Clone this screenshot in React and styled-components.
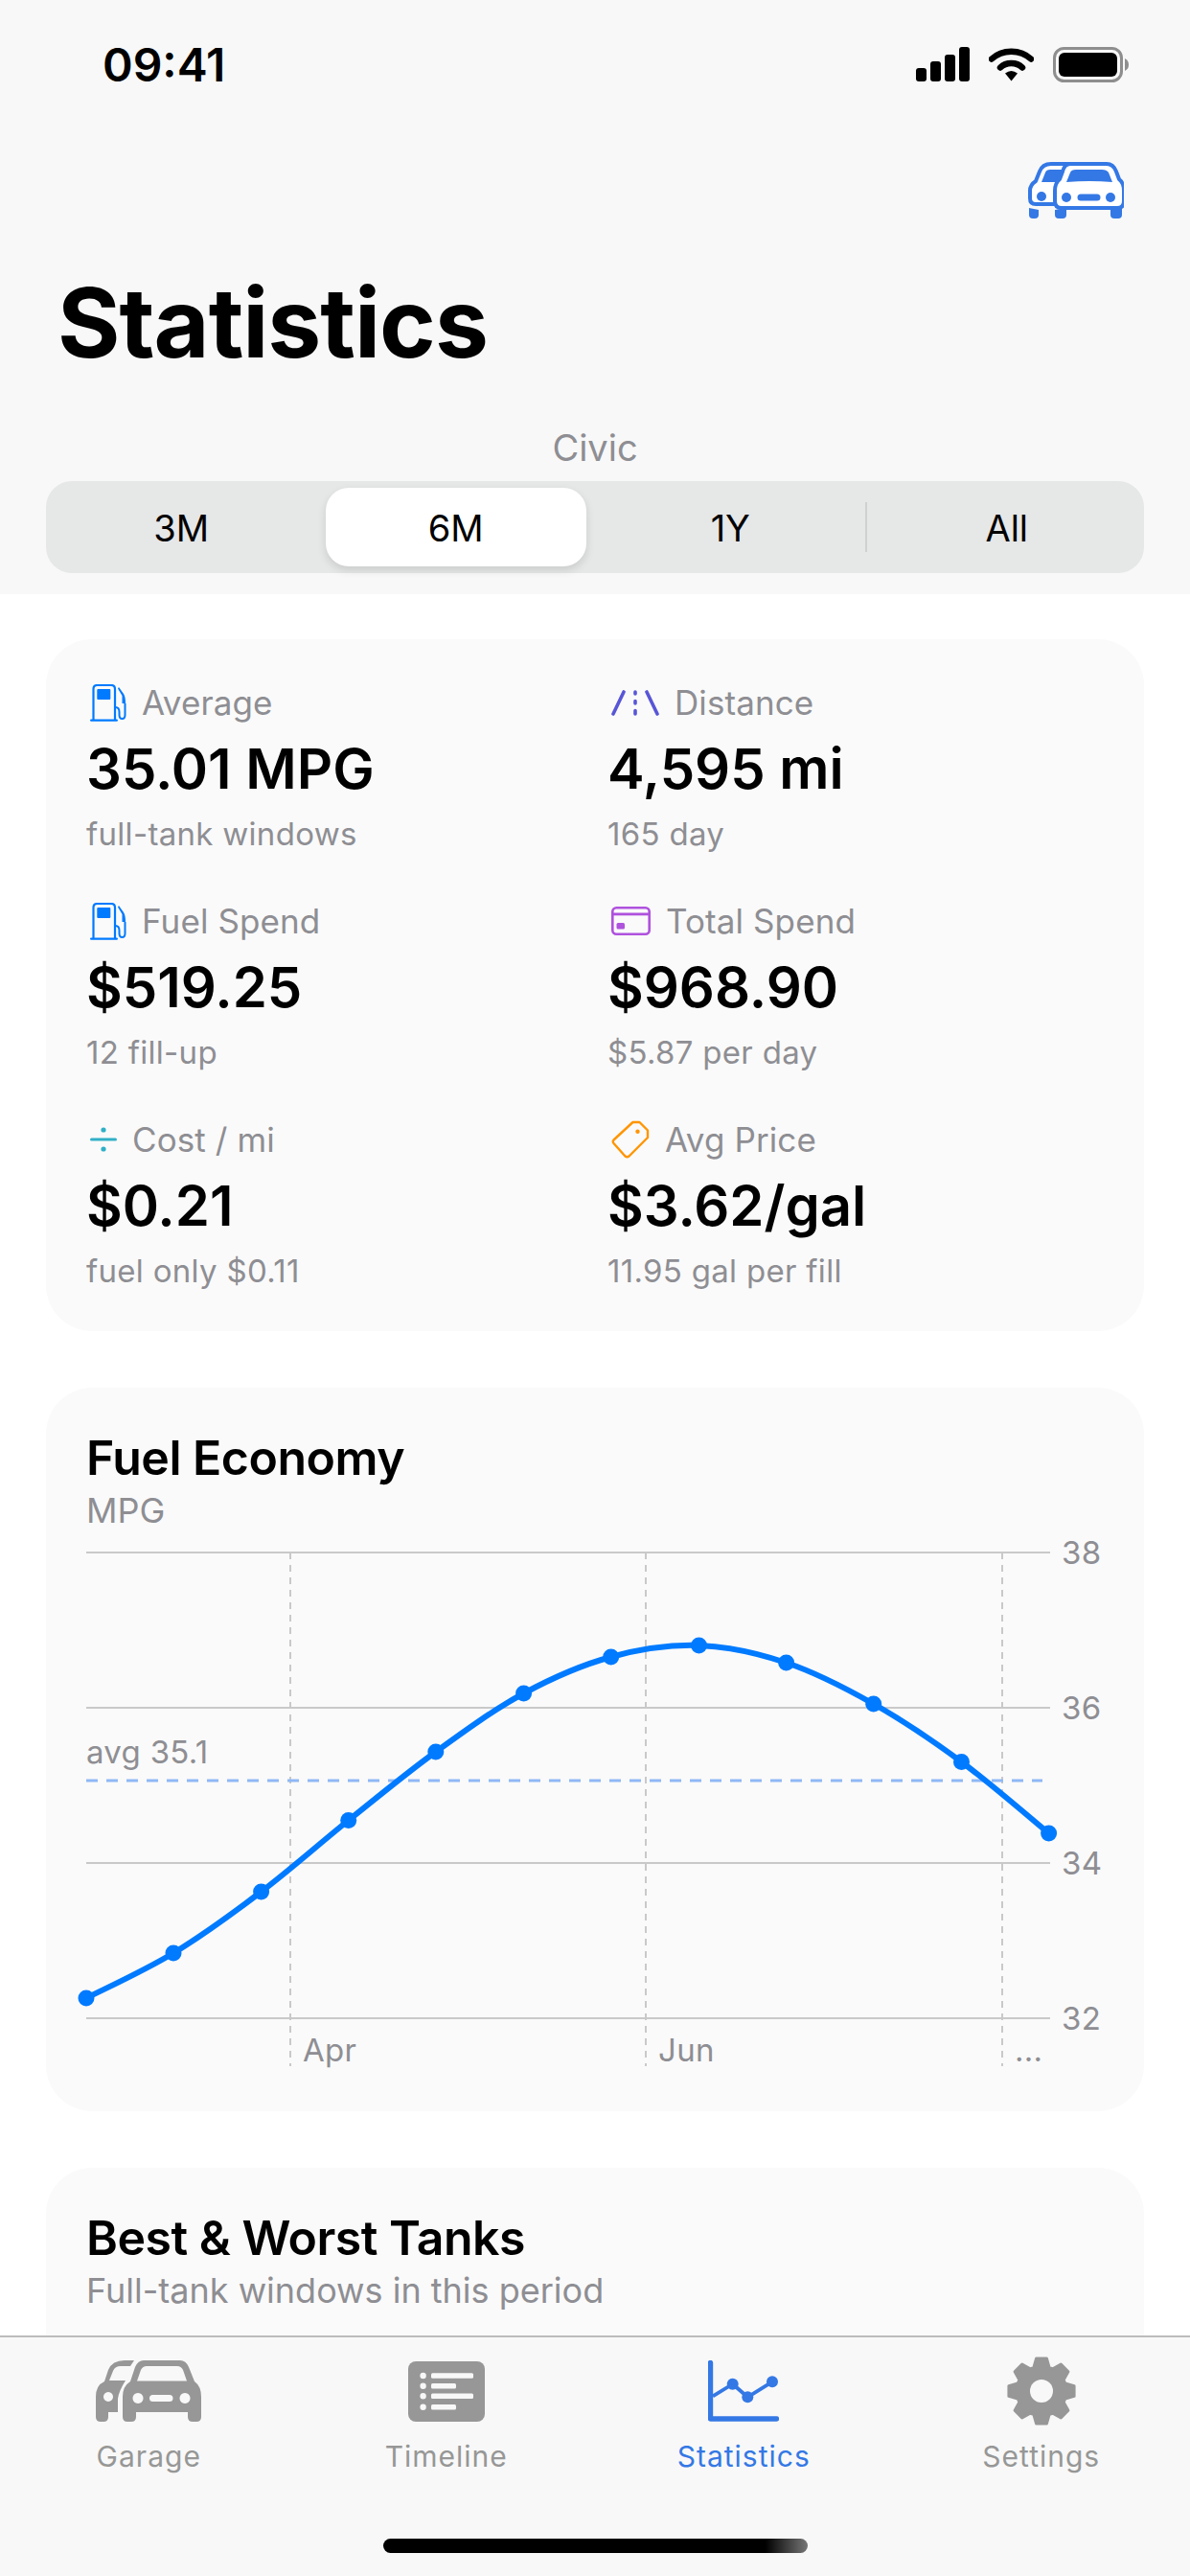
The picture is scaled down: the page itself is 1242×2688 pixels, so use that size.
import React from "react";
import styled, { createGlobalStyle } from "styled-components";

const GlobalStyle = createGlobalStyle`
  html, body { margin: 0; padding: 0; background: #fff; }
  body { font-family: Inter, "Liberation Sans", sans-serif; }
  * { box-sizing: border-box; }
`;

const GREY = "#8e8e93";
const BLUE = "#3478e5";
const TAB_GREY = "#969796";
const BAR_BG = "#f8f8f8";

const Page = styled.div`
  width: 1242px;
  height: 2688px;
  display: flex;
  flex-direction: column;
  overflow: hidden;
  background: #fff;
`;

const Header = styled.header`
  height: 620px;
  flex: none;
  background: ${BAR_BG};
`;

const StatusBar = styled.div`
  height: 134px;
  display: flex;
  align-items: center;
  justify-content: space-between;
  padding: 0 64px 0 107px;
`;

const Clock = styled.span`
  font-size: 48px;
  font-weight: 600;
  color: #000;
  letter-spacing: 0;
`;

const StatusIcons = styled.div`
  display: flex;
  align-items: center;
  gap: 20px;
`;

const TopAction = styled.div`
  margin-top: 35px;
  height: 59px;
  padding-right: 69px;
  display: flex;
  justify-content: flex-end;
`;

const Title = styled.h1`
  margin: 49px 0 0 60px;
  font-size: 100px;
  line-height: 120px;
  font-weight: 700;
  color: #000;
  letter-spacing: -1px;
`;

const VehicleName = styled.div`
  margin-top: 47px;
  font-size: 38px;
  line-height: 46px;
  text-align: center;
  color: ${GREY};
`;

const Segments = styled.div`
  margin: 12px 48px 0;
  height: 96px;
  border-radius: 27px;
  background: #e6e7e7;
  display: grid;
  grid-template-columns: repeat(4, 1fr);
`;

const Segment = styled.div`
  position: relative;
  display: flex;
  align-items: center;
  justify-content: center;
  padding-top: 2px;
  padding-right: ${({ $last }) => ($last ? "0" : "4px")};
  font-size: 38px;
  font-weight: 400;
  color: #000;
  ${({ $active }) =>
    $active &&
    `
    margin: 7px 9px 7px 5px;
    padding-right: 0;
    background: #fff;
    border-radius: 24px;
    box-shadow: 0 4px 10px rgba(0, 0, 0, 0.12);
  `}
  ${({ $divider }) =>
    $divider &&
    `
    &::after {
      content: "";
      position: absolute;
      right: 3px;
      top: 22px;
      bottom: 22px;
      width: 2px;
      background: #cfd0d0;
    }
  `}
`;

const Content = styled.main`
  flex: 1;
  min-height: 0;
  overflow: hidden;
  padding: 47px 48px 0;
  display: flex;
  flex-direction: column;
  gap: 59px;
`;

const Card = styled.section`
  flex: none;
  background: #fafafa;
  border-radius: 48px;
`;

const StatGrid = styled.div`
  display: grid;
  grid-template-columns: 544px 1fr;
  row-gap: 47px;
  padding: 43px 42px 42px;
`;

const Stat = styled.div`
  display: flex;
  flex-direction: column;
`;

const StatLabel = styled.div`
  height: 46px;
  display: flex;
  align-items: center;
  gap: 16px;
  padding-left: 4px;
  font-size: 35px;
  color: ${GREY};
  letter-spacing: 0.1px;
`;

const StatValue = styled.div`
  margin-top: 11px;
  font-size: 58px;
  line-height: 70px;
  font-weight: 600;
  color: #000;
`;

const StatNote = styled.div`
  margin-top: 12px;
  font-size: 33px;
  line-height: 42px;
  color: ${GREY};
  letter-spacing: 0.3px;
`;

const CardHead = styled.div`
  padding: 43px 42px 0;
`;

const CardTitle = styled.h2`
  margin: 0;
  font-size: 50px;
  line-height: 60px;
  font-weight: 600;
  color: #000;
  letter-spacing: -0.5px;
`;

const CardSub = styled.div`
  margin-top: 3px;
  font-size: 36px;
  line-height: 44px;
  color: ${GREY};
`;

const TanksBody = styled.div`
  height: 400px;
`;

const Chart = styled.svg`
  display: block;
  margin-bottom: 43px;
  text {
    font-family: Inter, "Liberation Sans", sans-serif;
    font-size: 33px;
    letter-spacing: 0.3px;
    fill: ${GREY};
  }
`;

const TabBar = styled.nav`
  flex: none;
  height: 251px;
  background: ${BAR_BG};
  border-top: 2px solid #bcbcbc;
  padding-top: 20px;
  display: flex;
  flex-direction: column;
`;

const Tabs = styled.div`
  display: grid;
  grid-template-columns: repeat(4, 1fr);
`;

const Tab = styled.div`
  display: flex;
  flex-direction: column;
  align-items: center;
  color: ${({ $active }) => ($active ? BLUE : TAB_GREY)};
`;

const TabIcon = styled.div`
  height: 72px;
  display: flex;
  align-items: center;
  justify-content: center;
`;

const TabLabel = styled.span`
  margin-top: 13px;
  font-size: 30px;
  line-height: 38px;
  font-weight: 400;
  letter-spacing: 1px;
`;

const HomeIndicator = styled.div`
  width: 443px;
  height: 15px;
  margin: auto auto 24px;
  border-radius: 8px;
  background: linear-gradient(90deg, #000 0%, #000 90%, #777 100%);
`;

function SignalIcon() {
  return (
    <svg width="56" height="36" viewBox="0 0 56 36">
      <rect x="0" y="22" width="11" height="14" rx="3" fill="#000" />
      <rect x="15" y="15" width="11" height="21" rx="3" fill="#000" />
      <rect x="30" y="8" width="11" height="28" rx="3" fill="#000" />
      <rect x="45" y="0" width="11" height="36" rx="3" fill="#000" />
    </svg>
  );
}

function WifiIcon() {
  return (
    <svg width="47" height="36" viewBox="0 0 47 36">
      <path d="M3 12.5 C14 2 33 2 44 12.5" fill="none" stroke="#000" strokeWidth="6.5" strokeLinecap="round" />
      <path d="M12 21.5 C18 15.5 29 15.5 35 21.5" fill="none" stroke="#000" strokeWidth="6.5" strokeLinecap="round" />
      <path d="M17 27.5 Q23.5 22.5 30 27.5 L23.5 35.5 Z" fill="#000" />
    </svg>
  );
}

function BatteryIcon() {
  return (
    <svg width="79" height="37" viewBox="0 0 79 37">
      <rect x="1.5" y="1.5" width="70" height="34" rx="10" fill="none" stroke="#8e8e8e" strokeWidth="3" />
      <rect x="6" y="6" width="61" height="25" rx="6" fill="#000" />
      <path d="M75 12 Q79 14 79 18.5 Q79 23 75 25 Z" fill="#8e8e8e" />
    </svg>
  );
}

function GarageOutlineIcon() {
  return (
    <svg width="100" height="59" viewBox="0 0 100 59">
      <path d="M11 50 V55 Q11 59 7 59 H5 Q1 59 1 55 V48 Z" fill={BLUE} />
      <path
        d="M30 2 H70 L80 30 V46 H30 V44 H8 Q2 44 2 38 V30 Q2 24 8 20 L12 10 Q15 2 24 2 Z"
        fill="#fff"
        stroke={BLUE}
        strokeWidth="4"
        strokeLinejoin="round"
      />
      <path d="M14 21 L18 11 Q19 8 23 8 H45 L36 21 Z" fill={BLUE} />
      <circle cx="14" cy="36" r="5" fill={BLUE} />
      <path d="M28 50 V55 Q28 59 32 59 H36 Q40 59 40 55 V48 Z" fill={BLUE} />
      <path d="M86 50 V55 Q86 59 90 59 H94 Q98 59 98 55 V48 Z" fill={BLUE} />
      <path
        d="M44 2 H82 Q89 2 92 10 L95 18 Q100 22 100 30 V41 Q100 48 93 48 H35 Q28 48 28 41 V30 Q28 22 33 18 L36 10 Q38 2 44 2 Z"
        fill="#fff"
        stroke={BLUE}
        strokeWidth="4"
        strokeLinejoin="round"
      />
      <path d="M40 21 L44 11 Q45 8 50 8 H77 Q82 8 84 11 L88 21 Q64 19 40 21 Z" fill={BLUE} />
      <circle cx="40" cy="37" r="5" fill={BLUE} />
      <circle cx="86" cy="37" r="5" fill={BLUE} />
      <rect x="51.5" y="33.5" width="24" height="7" rx="3.5" fill={BLUE} />
    </svg>
  );
}

function GarageFilledIcon() {
  return (
    <svg width="110" height="64" viewBox="0 0 110 64">
      <path
        fill={TAB_GREY}
        fillRule="evenodd"
        d="M40 0 H30 Q17 0 13 10 L9 22 Q0 26 0 38 V59 Q0 64 5 64 H8 Q13 64 13 59 V54 H23 V40 Q24 32 31 21 H14 L18 11 Q20 6 26 6 H36 Z M13 33 A5 5 0 1 1 12.99 33 Z"
      />
      <path
        fill={TAB_GREY}
        fillRule="evenodd"
        d="M50 0 H88 Q94 0 97 7 L103 22 Q110 27 110 38 V59 Q110 64 105 64 H101 Q96 64 96 59 V54 H42 V59 Q42 64 37 64 H33 Q28 64 28 59 V38 Q28 27 36 22 L41 7 Q44 0 50 0 Z M43 21.5 H95 L91 10 Q89 6 85 6 H53 Q49 6 47 10 Z M44 34 A5.5 5.5 0 1 0 44.01 34 Z M93 34 A5.5 5.5 0 1 0 93.01 34 Z M59.5 36 H77 A3.5 3.5 0 0 1 77 43 H59.5 A3.5 3.5 0 0 1 59.5 36 Z"
      />
    </svg>
  );
}

function TimelineIcon() {
  const rows = [
    [15, 68],
    [25.7, 50],
    [36.3, 68],
    [47.7, 50],
  ];
  return (
    <svg width="80" height="63" viewBox="0 0 80 63">
      <rect width="80" height="63" rx="8" fill={TAB_GREY} />
      {rows.map(([y, end]) => (
        <g key={y} fill={BAR_BG}>
          <circle cx="15.6" cy={y} r="3.2" />
          <rect x="24" y={y - 2.8} width={end - 24} height="5.6" rx="1.5" />
        </g>
      ))}
    </svg>
  );
}

function StatsIcon() {
  return (
    <svg width="74" height="64" viewBox="0 0 74 64">
      <path d="M2.5 2.5 V61 H71.5" fill="none" stroke={BLUE} strokeWidth="5.4" strokeLinecap="round" strokeLinejoin="round" />
      <path d="M5 37.3 L25.7 24.7 L41.3 38.3 L67 22.3" fill="none" stroke={BLUE} strokeWidth="3.8" />
      <circle cx="25.7" cy="24.7" r="6" fill={BLUE} />
      <circle cx="41.3" cy="38.3" r="6" fill={BLUE} />
      <circle cx="67" cy="22.3" r="6" fill={BLUE} />
    </svg>
  );
}

function gearPoints() {
  const pts = [];
  for (let i = 0; i < 8; i++) {
    const a = -90 + i * 45;
    [[-18, 26], [-9, 34.5], [9, 34.5], [18, 26]].forEach(([d, r]) => {
      const t = ((a + d) * Math.PI) / 180;
      pts.push(`${(36 + r * Math.cos(t)).toFixed(2)},${(36 + r * Math.sin(t)).toFixed(2)}`);
    });
  }
  return pts.join(" ");
}

function GearIcon() {
  return (
    <svg width="72" height="72" viewBox="0 0 72 72">
      <polygon points={gearPoints()} fill={TAB_GREY} stroke={TAB_GREY} strokeWidth="3" strokeLinejoin="round" />
      <circle cx="36" cy="36" r="12" fill={BAR_BG} />
    </svg>
  );
}

function PumpIcon() {
  const c = "#007aff";
  return (
    <svg width="38" height="39" viewBox="0 0 38 39">
      <path d="M3.5 37.5 V5 Q3.5 1 7.5 1 H22 Q26 1 26 5 V37.5" fill="none" stroke={c} strokeWidth="2.2" />
      <rect x="0" y="36.4" width="29" height="2.4" rx="1.2" fill={c} />
      <rect x="7.3" y="5" width="14" height="11" rx="1" fill={c} />
      <path d="M26.5 24 Q30.5 24 30.5 29 V32 Q30.5 36 33.5 36 Q36.5 36 36.5 32 V20" fill="none" stroke={c} strokeWidth="2" />
      <path d="M30 3 L35 10 Q37 13 37 20 L33.5 20 L33.5 12 L29 4.5 Z" fill={c} />
    </svg>
  );
}

function RoadIcon() {
  const c = "#5856d6";
  return (
    <svg width="50" height="27" viewBox="0 0 50 27">
      <path d="M13 2 L2 25 M37 2 L48 25" stroke={c} strokeWidth="3.6" strokeLinecap="round" />
      <path d="M25 2 V4 M25 11.5 V14 M25 21.5 V25" stroke={c} strokeWidth="3.6" strokeLinecap="round" />
    </svg>
  );
}

function CardIcon() {
  const c = "#af52de";
  return (
    <svg width="41" height="30" viewBox="0 0 41 30">
      <rect x="1.3" y="1.3" width="38.4" height="27.4" rx="4" fill="none" stroke={c} strokeWidth="2.6" />
      <rect x="1.3" y="6.5" width="38.4" height="2.8" fill={c} />
      <rect x="5.5" y="17" width="8.5" height="6.5" rx="1.5" fill={c} />
    </svg>
  );
}

function DivideIcon() {
  const c = "#30b0c7";
  return (
    <svg width="28" height="26" viewBox="0 0 28 26">
      <rect x="0" y="11.5" width="28" height="3" rx="1.5" fill={c} />
      <circle cx="14" cy="3" r="2.6" fill={c} />
      <circle cx="14" cy="23" r="2.6" fill={c} />
    </svg>
  );
}

function TagIcon() {
  const c = "#ff9500";
  return (
    <svg width="40" height="40" viewBox="0 0 40 40">
      <path
        d="M22.5 2 H29.5 L38 10.5 V18 L18.5 37.5 Q16.5 39 14.5 37.5 L2.5 24 Q1 22 2.5 20.5 Z"
        fill="none"
        stroke={c}
        strokeWidth="2.4"
        strokeLinejoin="round"
      />
      <circle cx="27.5" cy="11.7" r="2.2" fill={c} />
    </svg>
  );
}

const stats = [
  { icon: <PumpIcon />, label: "Average", value: "35.01 MPG", note: "full-tank windows" },
  { icon: <RoadIcon />, label: "Distance", value: "4,595 mi", note: "165 day" },
  { icon: <PumpIcon />, label: "Fuel Spend", value: "$519.25", note: "12 fill-up" },
  { icon: <CardIcon />, label: "Total Spend", value: "$968.90", note: "$5.87 per day" },
  { icon: <DivideIcon />, label: "Cost / mi", value: "$0.21", note: "fuel only $0.11" },
  { icon: <TagIcon />, label: "Avg Price", value: "$3.62/gal", note: "11.95 gal per fill" },
];

const points = [
  [90, 2085], [181, 2038], [272.6, 1974], [363.7, 1899.5], [454.8, 1828], [546.6, 1767],
  [637.7, 1729], [729.5, 1717], [820.6, 1735], [911.7, 1778], [1003.5, 1838.5], [1094.6, 1913],
];

// catmull-rom through the points, same look as the chart's smoothed line
function smoothPath(pts) {
  let d = `M${pts[0][0]} ${pts[0][1]}`;
  for (let i = 0; i < pts.length - 1; i++) {
    const p0 = pts[i - 1] || pts[i];
    const p1 = pts[i];
    const p2 = pts[i + 1];
    const p3 = pts[i + 2] || p2;
    const c1x = p1[0] + (p2[0] - p0[0]) / 6;
    const c1y = p1[1] + (p2[1] - p0[1]) / 6;
    const c2x = p2[0] - (p3[0] - p1[0]) / 6;
    const c2y = p2[1] - (p3[1] - p1[1]) / 6;
    d += ` C${c1x} ${c1y} ${c2x} ${c2y} ${p2[0]} ${p2[1]}`;
  }
  return d;
}

function EconomyChart() {
  const rows = [[1620, "38"], [1782, "36"], [1944, "34"], [2106, "32"]];
  const months = [[303, "Apr"], [674, "Jun"], [1046, "..."]];
  return (
    <Chart width="1146" height="562" viewBox="48 1598 1146 562">
      {rows.map(([y, label]) => (
        <g key={label}>
          <line x1="90" x2="1096" y1={y} y2={y} stroke="#c9c9c9" strokeWidth="2" />
          <text x="1108" y={y + 12}>{label}</text>
        </g>
      ))}
      {months.map(([x, label]) => (
        <g key={label}>
          <line x1={x} x2={x} y1="1620" y2="2156" stroke="#c9c9c9" strokeWidth="2" strokeDasharray="7 6" />
          <text x={x + 13} y="2151">{label}</text>
        </g>
      ))}
      <text x="90" y="1840">avg 35.1</text>
      <line x1="90" x2="1088" y1="1858" y2="1858" stroke="#8fb8f5" strokeWidth="3" strokeDasharray="12 9" />
      <path d={smoothPath(points)} fill="none" stroke="#007aff" strokeWidth="6" />
      {points.map(([x, y]) => (
        <circle key={x} cx={x} cy={y} r="8.5" fill="#007aff" />
      ))}
    </Chart>
  );
}

export default function App() {
  return (
    <Page>
      <GlobalStyle />
      <Header>
        <StatusBar>
          <Clock>09:41</Clock>
          <StatusIcons>
            <SignalIcon />
            <WifiIcon />
            <BatteryIcon />
          </StatusIcons>
        </StatusBar>
        <TopAction>
          <GarageOutlineIcon />
        </TopAction>
        <Title>Statistics</Title>
        <VehicleName>Civic</VehicleName>
        <Segments>
          <Segment>3M</Segment>
          <Segment $active>6M</Segment>
          <Segment $divider>1Y</Segment>
          <Segment $last>All</Segment>
        </Segments>
      </Header>
      <Content>
        <Card>
          <StatGrid>
            {stats.map((s) => (
              <Stat key={s.label}>
                <StatLabel>
                  {s.icon}
                  {s.label}
                </StatLabel>
                <StatValue>{s.value}</StatValue>
                <StatNote>{s.note}</StatNote>
              </Stat>
            ))}
          </StatGrid>
        </Card>
        <Card>
          <CardHead>
            <CardTitle>Fuel Economy</CardTitle>
            <CardSub>MPG</CardSub>
          </CardHead>
          <EconomyChart />
        </Card>
        <Card>
          <CardHead>
            <CardTitle>Best &amp; Worst Tanks</CardTitle>
            <CardSub>Full-tank windows in this period</CardSub>
          </CardHead>
          <TanksBody />
        </Card>
      </Content>
      <TabBar>
        <Tabs>
          <Tab>
            <TabIcon><GarageFilledIcon /></TabIcon>
            <TabLabel>Garage</TabLabel>
          </Tab>
          <Tab>
            <TabIcon><TimelineIcon /></TabIcon>
            <TabLabel>Timeline</TabLabel>
          </Tab>
          <Tab $active>
            <TabIcon><StatsIcon /></TabIcon>
            <TabLabel>Statistics</TabLabel>
          </Tab>
          <Tab>
            <TabIcon><GearIcon /></TabIcon>
            <TabLabel>Settings</TabLabel>
          </Tab>
        </Tabs>
        <HomeIndicator />
      </TabBar>
    </Page>
  );
}
